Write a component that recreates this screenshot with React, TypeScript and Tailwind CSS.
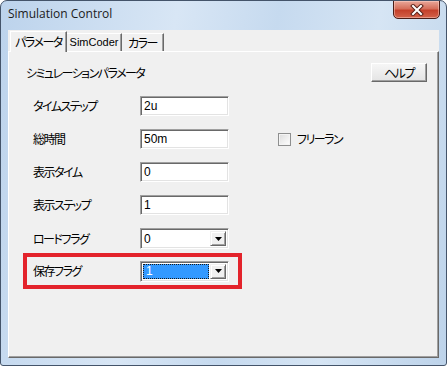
import React from 'react';

const jp = "font-['Noto_Sans_CJK_JP',sans-serif] [font-feature-settings:'palt'] tracking-[-1.5px] text-[12px] leading-none text-black whitespace-nowrap";
const latin = "font-['Liberation_Sans',sans-serif] text-[12px] leading-none text-black";
const latinSm = "font-['Liberation_Sans',sans-serif] text-[11px] leading-none text-black";

// classic sunken 3D edge used by edit boxes and combos
const sunken =
  'border border-t-[#a0a0a0] border-l-[#a0a0a0] border-r-white border-b-white shadow-[inset_1px_1px_0_#696969,inset_-1px_-1px_0_#e3e3e3]';

function TextBox({ value }: { value: string }) {
  return (
    <div className={`w-[89px] h-[20px] bg-white flex items-center pl-[3px] ${sunken}`}>
      <span className={latin}>{value}</span>
    </div>
  );
}

function ComboBox({ value, selected }: { value: string; selected?: boolean }) {
  return (
    <div className={`w-[89px] h-[21px] bg-white flex items-stretch p-[2px] ${sunken}`}>
      <div className="flex-1 flex items-stretch pr-[1px]">
        {selected ? (
          <div className="flex-1 bg-[#3399ff] border border-dotted border-[#1a1a1a] flex items-center pl-[2px]">
            <span className={`${latin} text-white`}>{value}</span>
          </div>
        ) : (
          <div className="flex-1 flex items-center pl-[1px]">
            <span className={latin}>{value}</span>
          </div>
        )}
      </div>
      <div className="w-[16px] bg-[#f0f0f0] border border-t-[#f0f0f0] border-l-[#f0f0f0] border-r-[#696969] border-b-[#696969] shadow-[inset_1px_1px_0_#fff,inset_-1px_-1px_0_#a0a0a0] flex items-center justify-center">
        <svg width="7" height="4" viewBox="0 0 7 4">
          <path d="M0 0h7L3.5 4z" fill="#000" />
        </svg>
      </div>
    </div>
  );
}

function Row({ label, children }: { label: string; children: React.ReactNode }) {
  return (
    <div className="flex items-center h-[20px] mb-[13px] pl-[24px]">
      <span className={`${jp} w-[107px]`}>{label}</span>
      {children}
    </div>
  );
}

export default function App() {
  return (
    <div className="w-[447px] h-[366px] bg-white">
      <div className="w-[447px] h-[366px] flex flex-col rounded-t-[7px] rounded-b-[3px] border border-[#44546a] bg-[linear-gradient(100deg,#bcd3ec,#d8e6f5_35%,#c6daef_55%,#d6e5f4_75%,#bdd3ea)] overflow-hidden">
        {/* Title bar */}
        <div className="h-[29px] flex items-start justify-between">
          <span className="pl-[7px] pt-[7px] font-['Open_Sans',sans-serif] text-[12px] leading-none text-[#1b1b1b]">
            Simulation Control
          </span>
          <div className="mr-[6px] -mt-px w-[47px] h-[19px] rounded-b-[5px] border border-[#4a1d17] bg-[linear-gradient(#e9a89a,#d56f5b_45%,#c4402a_55%,#d3624a)] shadow-[inset_0_0_0_1px_rgba(255,220,210,0.45)] flex items-center justify-center">
            <svg width="14" height="12" viewBox="0 0 14 12">
              <path d="M3 2l8 8M11 2l-8 8" stroke="#5a2219" strokeWidth="4" strokeLinecap="square" />
              <path d="M3 2l8 8M11 2l-8 8" stroke="#fff" strokeWidth="2" strokeLinecap="square" />
            </svg>
          </div>
        </div>

        {/* Client area */}
        <div className="flex-1 mx-[7px] mb-[7px] bg-[#f0f0f0] flex flex-col">
          {/* Tabs */}
          <div className="h-[21px] flex items-end pl-[2px] relative z-10">
            <div className={`h-[21px] w-[57px] -mb-px bg-[#f0f0f0] border-t border-l border-white border-r border-r-[#696969] shadow-[inset_-1px_0_0_#a0a0a0] flex items-center justify-center ${jp}`}>
              パラメータ
            </div>
            <div className={`h-[18px] w-[55px] border-t border-white border-r border-r-[#696969] shadow-[inset_-1px_0_0_#a0a0a0] flex items-center justify-center ${latinSm}`}>
              SimCoder
            </div>
            <div className={`h-[18px] w-[42px] border-t border-white border-r border-r-[#696969] shadow-[inset_-1px_0_0_#a0a0a0] flex items-center justify-center ${jp}`}>
              カラー
            </div>
          </div>

          {/* Tab panel */}
          <div className="flex-1 border-t border-l border-white border-r border-b border-r-[#696969] border-b-[#696969] shadow-[inset_-1px_-1px_0_#a0a0a0] flex flex-col">
            <div className="mt-[11px] h-[19px] flex items-center justify-between pl-[17px] pr-[11px]">
              <span className={jp}>シミュレーションパラメータ</span>
              <button className={`w-[56px] h-[19px] bg-[linear-gradient(#f6f6f6,#e4e4e4)] border border-t-white border-l-white border-r-[#696969] border-b-[#696969] shadow-[inset_-1px_-1px_0_#a0a0a0] flex items-center justify-center ${jp}`}>
                ヘルプ
              </button>
            </div>

            <div className="mt-[14px] flex flex-col">
              <Row label="タイムステップ">
                <TextBox value="2u" />
              </Row>
              <Row label="総時間">
                <TextBox value="50m" />
                <div className="ml-[49px] w-[13px] h-[13px] border border-[#8e8f8f] bg-[linear-gradient(135deg,#dcdcdc,#fff)] shadow-[inset_0_0_0_1px_#f4f4f4]" />
                <span className={`${jp} ml-[6px]`}>フリーラン</span>
              </Row>
              <Row label="表示タイム">
                <TextBox value="0" />
              </Row>
              <Row label="表示ステップ">
                <TextBox value="1" />
              </Row>
              <div className="flex items-center h-[21px] pl-[24px]">
                <span className={`${jp} w-[107px]`}>ロードフラグ</span>
                <ComboBox value="0" />
              </div>
              <div className="mt-[4px] ml-[14px] w-[219px] h-[36px] border-4 border-[#e3232b] flex items-center pl-[6px]">
                <span className={`${jp} w-[107px]`}>保存フラグ</span>
                <ComboBox value="1" selected />
              </div>
            </div>
          </div>
        </div>
      </div>
    </div>
  );
}
